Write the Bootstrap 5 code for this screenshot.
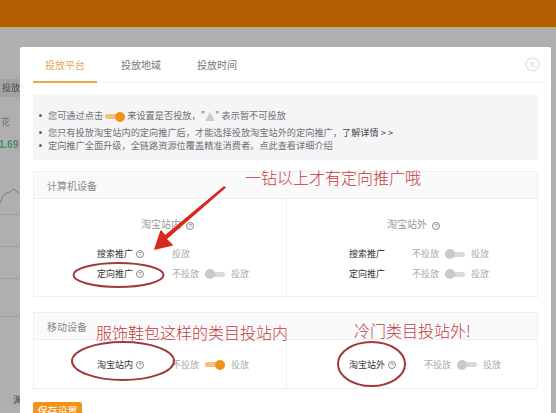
<!DOCTYPE html>
<html lang="zh"><head><meta charset="utf-8">
<link href="https://cdn.jsdelivr.net/npm/bootstrap@5.3.0/dist/css/bootstrap.min.css" rel="stylesheet">
<style>
html,body{width:556px;height:413px;overflow:hidden}
body{background:#afafb0;font-family:"Noto Sans CJK SC","Liberation Sans",sans-serif;font-size:9px;color:#666;position:relative;line-height:1.3}
.stage{position:absolute;inset:0;filter:blur(.5px)}
.topbar{height:28px;background:#b25e00;border-bottom:1px solid #c9a878}
.bg-snips{position:absolute;left:0;top:0;width:20px;height:413px;overflow:hidden}
.snip{position:absolute;left:0;white-space:nowrap}
.snip-band{top:79px;width:20px;height:18px;background:#a3a3a3;color:#444;padding:3px 0 0 2px}
.snip-a{top:116px;left:-8px;color:#707070}
.snip-b{top:138px;left:-1px;color:#3f8f60;font-weight:700;font-family:"Liberation Sans",sans-serif;font-size:10px}
.snip-c{top:394px;left:13px;color:#444}
.snip-line{width:20px;height:1px;background:#a0a0a0}
.dlg{position:absolute;left:20px;top:47px;width:531px;height:380px;background:#fff;border-radius:2px;padding:0 13px}
.tabsbar{height:36px;border-bottom:1px solid #f1f1f1;margin-right:-7px;flex-wrap:nowrap}
.tabsbar .nav-link{padding:0;height:36px;line-height:36px;font-size:10px;color:#777;text-align:center;border-radius:0}
.tabsbar .t1{width:64px;color:#e9a659;border-bottom:2px solid #eba949}
.t2{margin-left:12px;width:64px}
.t3{margin-left:12px;width:64px}
.closer{position:absolute;right:11px;top:10px;width:15px;height:15px}
.notice{background:#f5f5f8;height:65px;margin:12px 0 11px;padding:14px 0 0 5px;width:505px}
.notice ul{margin:0;padding:0;list-style:none}
.notice li{height:13px;line-height:13px;padding-left:10px;position:relative;white-space:nowrap;font-size:9.2px;color:#707070}
.notice li:first-child{height:17px;line-height:12px}
.notice li::before{content:"";position:absolute;left:1px;top:5px;width:3px;height:3px;border-radius:50%;background:#666}
.notice b{font-weight:400;color:#444}
.sw{display:inline-block;width:20px;height:5px;border-radius:3px;background:#d9d9d9;position:relative;vertical-align:middle}
.sw::after{content:"";position:absolute;left:0;top:-2.5px;width:10px;height:10px;border-radius:50%;background:#c9c9c9}
.sw.on{background:#f3c07d}
.sw.on::after{left:auto;right:0;background:#ef9418}
.sect{width:505px;border:1px solid #efeff1;background:#fff}
.sect-head{height:27px;line-height:27px;background:#fafafb;border-bottom:1px solid #efeff1;padding-left:13px;color:#888;font-size:10px}
.s1{height:126px;margin-bottom:15px}
.s2{height:77px;margin-bottom:13px}
.colbox{flex:0 0 252px;width:252px;height:100%;padding:0}
.colbox+.colbox{border-left:1px solid #efeff1}
.colbox+.colbox .rw{padding-left:62px}
.s1 .sect-body{height:98px}
.s2 .sect-body{height:49px}
.ctitle{height:16px;line-height:16px;margin:17px 0 12px;color:#999;font-size:10px;white-space:nowrap}
.ct-in{padding-left:107px}
.ct-out{padding-left:100px}
.rw{height:20px;padding-left:63px;white-space:nowrap;align-items:center;color:#aaa;gap:6px}
.lab{color:#333;width:36px;font-size:9px}
.tip{display:inline-block;width:8px;height:8px;border:1px solid #888;border-radius:50%;font-size:6px;line-height:6px;text-align:center;color:#777;margin-left:3px;font-family:"Liberation Sans",sans-serif}
.lblw{width:69px;display:flex;align-items:center}
.lblx{width:57px;display:flex;align-items:center}
.s2 .sect-body .rw{height:49px}
.saver{display:block;width:49px;height:28px;background:#ef9418;border:0;border-radius:2px;color:#fff;font-size:10px;padding:0 0 10px;text-align:center;line-height:18px}
.note{position:absolute;color:#c23b3d;font-size:16px;line-height:20px;white-space:nowrap;font-weight:300;font-family:"Noto Sans CJK SC",sans-serif}
.n1{left:245px;top:167px}
.n2{left:96px;top:322px}
.n3{left:354px;top:320px}
.ink{position:absolute;left:0;top:0;width:556px;height:413px}
</style></head>
<body>
<div class="stage">
<div class="topbar"></div>
<div class="bg-snips">
  <div class="snip snip-band">投放</div>
  <div class="snip snip-a">市花</div>
  <div class="snip snip-b">1.69</div>
  <svg class="snip" style="top:186px" width="20" height="18" viewBox="0 0 20 18"><path d="M0 17 3 10 6 7 10 6 13 3 15 4 19 7" fill="none" stroke="#6f7f90" stroke-width="1"/></svg>
  <div class="snip snip-line" style="top:214px"></div>
  <div class="snip snip-line" style="top:246px"></div>
  <div class="snip snip-line" style="top:278px"></div>
  <div class="snip snip-line" style="top:316px"></div>
  <div class="snip snip-c">渊</div>
</div>
<div class="dlg">
  <ul class="nav tabsbar">
    <li class="nav-item"><a class="nav-link t1" href="#">投放平台</a></li>
    <li class="nav-item"><a class="nav-link t2" href="#">投放地域</a></li>
    <li class="nav-item"><a class="nav-link t3" href="#">投放时间</a></li>
  </ul>
  <svg class="closer" viewBox="0 0 15 15"><circle cx="7.5" cy="7.5" r="6.5" fill="none" stroke="#ddd" stroke-width="1.2"/><path d="M5 5l5 5M10 5l-5 5" stroke="#ccc" stroke-width="1"/></svg>
  <div class="notice">
    <ul>
      <li>您可通过点击 <span class="sw on"></span> 来设置是否投放，"<svg width="10" height="9" viewBox="0 0 10 9"><path d="M5 0 10 9H0z" fill="#ccc"/></svg>" 表示暂不可投放</li>
      <li>您只有投放淘宝站内的定向推广后，才能选择投放淘宝站外的定向推广，<b>了解详情 &gt; &gt;</b></li>
      <li>定向推广全面升级，全链路资源位覆盖精准消费者。点此查看详细介绍</li>
    </ul>
  </div>
  <div class="sect s1">
    <div class="sect-head">计算机设备</div>
    <div class="sect-body d-flex">
      <div class="colbox">
        <div class="ctitle ct-in">淘宝站内 <span class="tip">?</span></div>
        <div class="rw d-flex"><span class="lblw"><span class="lab">搜索推广</span><span class="tip">?</span></span><span>投放</span></div>
        <div class="rw d-flex"><span class="lblw"><span class="lab">定向推广</span><span class="tip">?</span></span><span>不投放</span><span class="sw"></span><span>投放</span></div>
      </div>
      <div class="colbox">
        <div class="ctitle ct-out">淘宝站外 <span class="tip">?</span></div>
        <div class="rw d-flex"><span class="lblx"><span class="lab">搜索推广</span></span><span>不投放</span><span class="sw"></span><span>投放</span></div>
        <div class="rw d-flex"><span class="lblx"><span class="lab">定向推广</span></span><span>不投放</span><span class="sw"></span><span>投放</span></div>
      </div>
    </div>
  </div>
  <div class="sect s2">
    <div class="sect-head">移动设备</div>
    <div class="sect-body d-flex">
      <div class="colbox">
        <div class="rw d-flex"><span class="lblw"><span class="lab">淘宝站内</span><span class="tip">?</span></span><span>不投放</span><span class="sw on"></span><span>投放</span></div>
      </div>
      <div class="colbox">
        <div class="rw d-flex"><span class="lblw"><span class="lab">淘宝站外</span><span class="tip">?</span></span><span>不投放</span><span class="sw"></span><span>投放</span></div>
      </div>
    </div>
  </div>
  <button class="btn saver" type="button">保存设置</button>
</div>
<svg class="ink" viewBox="0 0 556 413">
  <g fill="none" stroke="#a03a3c" stroke-width="2">
    <ellipse cx="118.500" cy="275" rx="45" ry="12"/>
    <ellipse cx="123" cy="361" rx="51" ry="19"/>
    <ellipse cx="371.500" cy="364" rx="33.500" ry="22"/>
  </g>
  <path d="M225 187.500 166 239 172 245 155 249 161 231 165 236 224 187z" fill="#d9291f" stroke="#d9291f" stroke-width="1.500" stroke-linejoin="round"/>
</svg>
<div class="note n1">一钻以上才有定向推广哦</div>
<div class="note n2">服饰鞋包这样的类目投站内</div>
<div class="note n3">冷门类目投站外!</div>
</div>
<script src="https://cdn.jsdelivr.net/npm/bootstrap@5.3.0/dist/js/bootstrap.bundle.min.js"></script>
</body></html>
